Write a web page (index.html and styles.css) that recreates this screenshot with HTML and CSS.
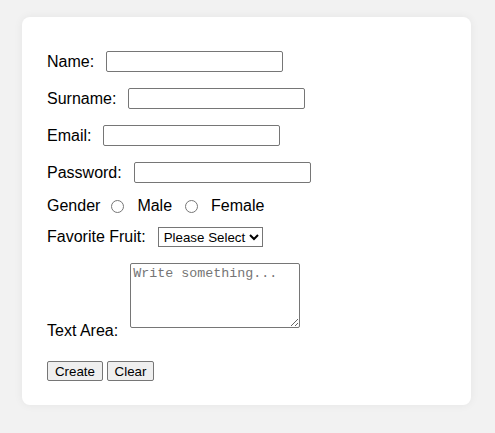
FILE: index.html
```html
<!DOCTYPE html>
<html>
<head>
<meta charset="utf-8">
<link rel="stylesheet" href="styles.css">
</head>
<body>
<div class="card">
  <form class="form">
    <div class="row">
      <label class="lbl" for="name">Name:</label>
      <input class="txt" id="name" type="text">
    </div>
    <div class="row">
      <label class="lbl" for="surname">Surname:</label>
      <input class="txt" id="surname" type="text">
    </div>
    <div class="row">
      <label class="lbl" for="email">Email:</label>
      <input class="txt" id="email" type="email">
    </div>
    <div class="row">
      <label class="lbl" for="password">Password:</label>
      <input class="txt" id="password" type="password">
    </div>
    <div class="row row-gender">
      <span class="lbl-g">Gender</span>
      <input class="radio" type="radio" name="g" id="male">
      <label class="opt" for="male">Male</label>
      <input class="radio" type="radio" name="g" id="female">
      <label class="opt" for="female">Female</label>
    </div>
    <div class="row row-fruit">
      <label class="lbl" for="fruit">Favorite Fruit:</label>
      <select class="sel" id="fruit">
        <option>Please Select</option>
      </select>
    </div>
    <div class="row row-area">
      <label class="lbl" for="ta">Text Area:</label>
      <textarea class="area" id="ta" placeholder="Write something..."></textarea>
    </div>
    <div class="actions">
      <button class="btn btn-create" type="button">Create</button>
      <button class="btn btn-clear" type="button">Clear</button>
    </div>
  </form>
</div>
</body>
</html>
```

FILE: styles.css
```css
html, body {
  margin: 0;
  padding: 0;
}
body {
  background: #f2f2f2;
  font-family: "Liberation Sans", Arial, sans-serif;
  font-size: 16px;
  color: #000;
  padding: 17px 24px 0 22px;
  height: 433px;
  box-sizing: border-box;
}
.card {
  width: 449px;
  height: 388px;
  box-sizing: border-box;
  background: #fff;
  border-radius: 8px;
  box-shadow: 0 0 10px rgba(0, 0, 0, 0.06);
  padding: 34px 25px 0 25px;
}
.form {
  display: flex;
  flex-direction: column;
}
.row {
  display: flex;
  align-items: center;
  height: 21px;
  margin-bottom: 16px;
  line-height: 18px;
}
.lbl {
  margin-right: 12px;
}
.txt {
  width: 177px;
  height: 21px;
  box-sizing: border-box;
  margin: 0;
  padding: 1px 2px;
  border: 1px solid #767676;
  border-radius: 2px;
  font-family: "Liberation Sans", Arial, sans-serif;
  font-size: 13.33px;
}
.row-gender {
  height: 16px;
  margin-top: -1px;
  margin-bottom: 13px;
}
.lbl-g {
  margin-right: 10px;
}
.radio {
  width: 13px;
  height: 13px;
  margin: 1px 13px 0 1px;
}
.opt {
  margin-right: 12px;
}
.row-fruit {
  height: 20px;
  margin-bottom: 16px;
}
.sel {
  width: 105px;
  height: 20px;
  margin: 0;
  font-family: "Liberation Sans", Arial, sans-serif;
  font-size: 13.33px;
  color: #000;
  border: 1px solid #767676;
  border-radius: 0;
  background: #fff;
  padding: 0 0 0 1px;
}
.row-area {
  height: auto;
  align-items: flex-end;
  margin-bottom: 21px;
}
.area {
  width: 170px;
  height: 65px;
  box-sizing: border-box;
  margin: 0 0 12px 0;
  padding: 2px;
  border: 1px solid #767676;
  border-radius: 2px;
  font-family: "Liberation Mono", "DejaVu Sans Mono", monospace;
  font-size: 13.33px;
  resize: both;
}
.area::placeholder {
  color: #757575;
}
.actions {
  display: flex;
  gap: 4px;
}
.btn {
  height: 20px;
  box-sizing: border-box;
  margin: 0;
  padding: 1px 6px;
  font-family: "Liberation Sans", Arial, sans-serif;
  font-size: 13.33px;
  color: #000;
  background: #efefef;
  border: 1px solid #767676;
  border-radius: 2px;
}
.btn-create {
  width: 56px;
}
.btn-clear {
  width: 47px;
}
```
